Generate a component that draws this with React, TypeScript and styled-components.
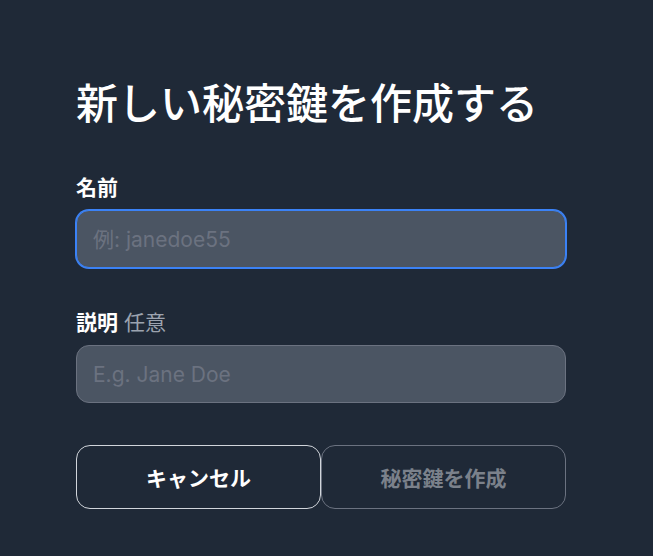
import React from "react";
import styled, { createGlobalStyle } from "styled-components";

const GlobalStyle = createGlobalStyle`
  html, body {
    margin: 0;
    padding: 0;
    background: #1f2937;
  }
  body {
    font-family: Inter, "Noto Sans CJK JP", sans-serif;
    color: #ffffff;
  }
`;

const Page = styled.div`
  min-height: 556px;
  background: #1f2937;
  padding: 79px 0 0 76px;
  box-sizing: border-box;
`;

const Form = styled.form`
  width: 490px;
  display: flex;
  flex-direction: column;
`;

const Title = styled.h1`
  margin: 0;
  font-size: 42px;
  line-height: 50px;
  font-weight: 500;
  color: #ffffff;
`;

const Field = styled.div<{ $top: number }>`
  display: flex;
  flex-direction: column;
  gap: 8px;
  margin-top: ${(p) => p.$top}px;
`;

const Label = styled.label`
  font-size: 21px;
  line-height: 28px;
  font-weight: 700;
  color: #ffffff;
`;

const Optional = styled.span`
  font-weight: 400;
  color: #9ca3af;
  margin-left: 6px;
`;

const Input = styled.input<{ $focused?: boolean }>`
  box-sizing: border-box;
  width: 100%;
  height: 58px;
  padding: 0 16px;
  border-radius: 13px;
  border: 1px solid ${(p) => (p.$focused ? "#3b82f6" : "#6b7280")};
  box-shadow: ${(p) => (p.$focused ? "0 0 0 1px #3b82f6" : "none")};
  background: #4b5563;
  color: #ffffff;
  font-family: Inter, "Noto Sans CJK JP", sans-serif;
  font-size: 21px;
  outline: none;

  &::placeholder {
    color: #6b7280;
  }
`;

const Actions = styled.div`
  display: grid;
  grid-template-columns: 1fr 1fr;
  margin-top: 42px;
`;

const Button = styled.button<{ $variant: "cancel" | "submit" }>`
  box-sizing: border-box;
  height: 64px;
  border-radius: 14px;
  background: transparent;
  font-family: Inter, "Noto Sans CJK JP", sans-serif;
  font-size: 21px;
  font-weight: 700;
  border: 1px solid
    ${(p) => (p.$variant === "cancel" ? "#d1d5db" : "#6b7280")};
  color: ${(p) => (p.$variant === "cancel" ? "#ffffff" : "#7b818b")};
  cursor: ${(p) => (p.$variant === "cancel" ? "pointer" : "not-allowed")};
`;

export default function App() {
  return (
    <>
      <GlobalStyle />
      <Page>
        <Form onSubmit={(e) => e.preventDefault()}>
          <Title>新しい秘密鍵を作成する</Title>
          <Field $top={45}>
            <Label htmlFor="name">名前</Label>
            <Input id="name" placeholder="例: janedoe55" $focused />
          </Field>
          <Field $top={41}>
            <Label htmlFor="desc">
              説明<Optional>任意</Optional>
            </Label>
            <Input id="desc" placeholder="E.g. Jane Doe" />
          </Field>
          <Actions>
            <Button type="button" $variant="cancel">
              キャンセル
            </Button>
            <Button type="submit" $variant="submit" disabled>
              秘密鍵を作成
            </Button>
          </Actions>
        </Form>
      </Page>
    </>
  );
}
